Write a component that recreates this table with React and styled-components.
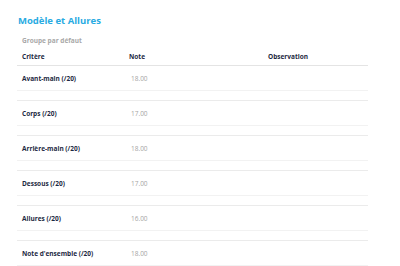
import React from "react";
import styled, { createGlobalStyle } from "styled-components";

const GlobalStyle = createGlobalStyle`
  body {
    margin: 0;
    background: #fff;
    font-family: "Open Sans", Lato, sans-serif;
  }
`;

const rows = [
  { label: "Avant-main (/20)", note: "18.00" },
  { label: "Corps (/20)", note: "17.00" },
  { label: "Arrière-main (/20)", note: "18.00" },
  { label: "Dessous (/20)", note: "17.00" },
  { label: "Allures (/20)", note: "16.00" },
  { label: "Note d'ensemble (/20)", note: "18.00" },
];

export default function App() {
  return (
    <>
      <GlobalStyle />
      <Page>
        <Title>Modèle et Allures</Title>
        <Group>Groupe par défaut</Group>
        <Table>
          <Head>
            <HeadCell>Critère</HeadCell>
            <HeadCell>Note</HeadCell>
            <HeadCell>Observation</HeadCell>
          </Head>
          {rows.map((r) => (
            <React.Fragment key={r.label}>
              <Row>
                <Label>{r.label}</Label>
                <Value>{r.note}</Value>
                <span />
              </Row>
              <Spacer />
            </React.Fragment>
          ))}
        </Table>
      </Page>
    </>
  );
}

const Page = styled.div`
  padding: 15px 32px 0 17px;
  width: 351px;
`;

const Title = styled.h2`
  margin: 0 0 0 1px;
  font-size: 9.5px;
  font-weight: 700;
  color: #29abe2;
  line-height: 12px;
`;

const Group = styled.div`
  margin: 9px 0 0 5px;
  font-size: 6.5px;
  font-weight: 700;
  color: #a8a8a8;
  line-height: 9px;
`;

const Table = styled.div`
  display: flex;
  flex-direction: column;
`;

const cols = `
  display: grid;
  grid-template-columns: 107px 139px 1fr;
  align-items: center;
  padding-left: 5px;
`;

const Head = styled.div`
  ${cols}
  height: 17px;
  margin-top: 3px;
  border-bottom: 1px solid #e4e4e4;
`;

const HeadCell = styled.span`
  font-size: 6.5px;
  font-weight: 700;
  color: #1d2942;
`;

const Row = styled.div`
  ${cols}
  height: 23px;
  padding-top: 1px;
  border-bottom: 1px solid #f2f2f2;
`;

const Label = styled.span`
  font-size: 6.5px;
  font-weight: 700;
  color: #1d2942;
`;

const Value = styled.span`
  font-size: 6.5px;
  color: #a5a5a5;
  padding-left: 2px;
`;

const Spacer = styled.div`
  height: 9px;
  border-bottom: 1px solid #ebebeb;
`;
